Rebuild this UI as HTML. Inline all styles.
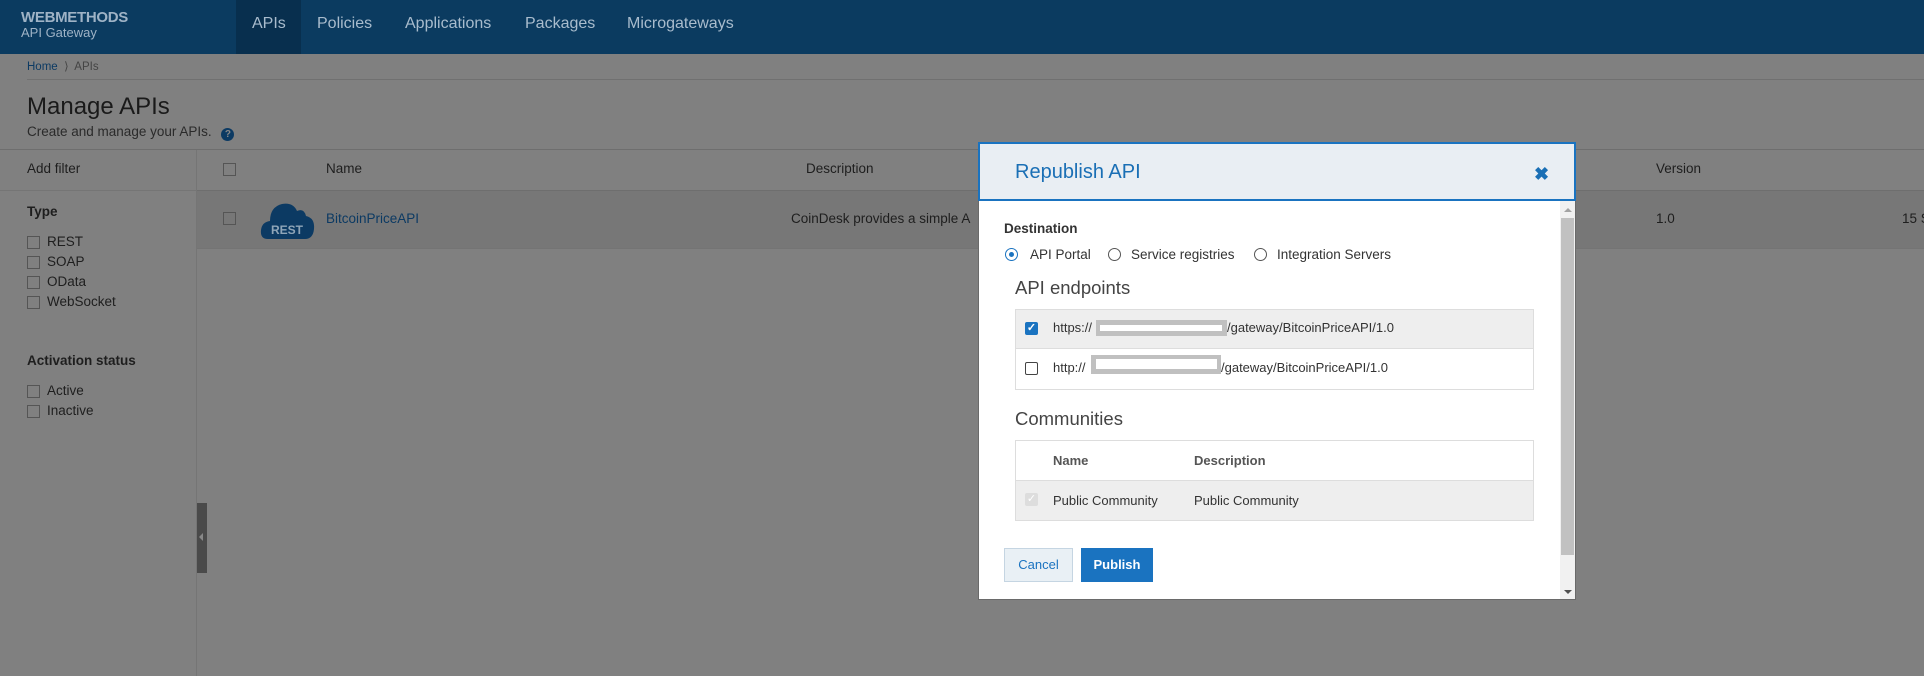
<!DOCTYPE html>
<html><head><meta charset="utf-8"><style>
*{box-sizing:border-box;margin:0;padding:0}
body{width:1924px;height:676px;overflow:hidden;background:#808080;font-family:"Liberation Sans",Arial,sans-serif;position:relative;color:#1a1a1a}
.a{position:absolute;white-space:nowrap}
.hdr{left:0;top:0;width:1924px;height:54px;background:#0b3b60}
.nav{top:15px;font-size:16px;color:#a9bccd}
.cb{position:absolute;width:13px;height:13px;border:1px solid #555;background:transparent}
.sb{font-size:13.5px;color:#1e1e1e}
.m{font-size:13px;color:#333}
</style></head><body>
<div class="a hdr"></div>
<div class="a" style="left:236px;top:0;width:65px;height:54px;background:#082f4e"></div>
<div class="a" style="left:21px;top:9px;font-size:15px;font-weight:bold;color:#9fb3c6;letter-spacing:-0.3px">WEBMETHODS</div>
<div class="a" style="left:21px;top:25px;font-size:13px;color:#9fb3c6">API Gateway</div>
<div class="a nav" style="left:252px">APIs</div>
<div class="a nav" style="left:317px">Policies</div>
<div class="a nav" style="left:405px">Applications</div>
<div class="a nav" style="left:525px">Packages</div>
<div class="a nav" style="left:627px">Microgateways</div>

<div class="a" style="left:27px;top:59px;font-size:11.5px;color:#0c3a63">Home <span style="color:#444">&nbsp;⟩&nbsp; APIs</span></div>
<div class="a" style="left:27px;top:79px;width:1897px;height:1px;background:#707070"></div>
<div class="a" style="left:27px;top:93px;font-size:24px;color:#1a1a1a">Manage APIs</div>
<div class="a" style="left:27px;top:124px;font-size:13.5px;color:#2a2a2a">Create and manage your APIs. <span style="display:inline-block;width:13px;height:13px;border-radius:50%;background:#0c3a63;color:#888;font-size:10px;text-align:center;line-height:13px;font-weight:bold;vertical-align:-1px;margin-left:6px">?</span></div>
<div class="a" style="left:0;top:149px;width:1924px;height:1px;background:#6e6e6e"></div>
<div class="a" style="left:196px;top:150px;width:1px;height:526px;background:#757575"></div>
<div class="a" style="left:0;top:190px;width:196px;height:1px;background:#757575"></div>
<div class="a" style="left:197px;top:190px;width:1727px;height:59px;background:#777;border-top:1px solid #6e6e6e;border-bottom:1px solid #747474"></div>

<div class="a sb" style="left:27px;top:161px">Add filter</div>
<div class="a sb" style="left:27px;top:204px;font-weight:bold">Type</div>
<div class="cb" style="left:27px;top:236px"></div><div class="a sb" style="left:47px;top:234px">REST</div>
<div class="cb" style="left:27px;top:256px"></div><div class="a sb" style="left:47px;top:254px">SOAP</div>
<div class="cb" style="left:27px;top:276px"></div><div class="a sb" style="left:47px;top:274px">OData</div>
<div class="cb" style="left:27px;top:296px"></div><div class="a sb" style="left:47px;top:294px">WebSocket</div>
<div class="a sb" style="left:27px;top:353px;font-weight:bold">Activation status</div>
<div class="cb" style="left:27px;top:385px"></div><div class="a sb" style="left:47px;top:383px">Active</div>
<div class="cb" style="left:27px;top:405px"></div><div class="a sb" style="left:47px;top:403px">Inactive</div>
<div class="a" style="left:197px;top:503px;width:10px;height:70px;background:#4a4a4a"></div>
<div class="a" style="left:199px;top:533px;width:0;height:0;border-top:4px solid transparent;border-bottom:4px solid transparent;border-right:4px solid #888"></div>

<div class="cb" style="left:223px;top:163px"></div>
<div class="a sb" style="left:326px;top:161px">Name</div>
<div class="a sb" style="left:806px;top:161px">Description</div>
<div class="a sb" style="left:1656px;top:161px">Version</div>
<div class="cb" style="left:223px;top:212px"></div>
<svg class="a" style="left:260px;top:199px" width="56" height="42" viewBox="0 0 56 42"><path d="M8 40 Q0 40 1 31 Q2 23 10 22 Q10 8 22 5 Q33 3 37 12 Q44 9 46 17 Q55 19 54 30 Q53 40 45 40 Z" fill="#0c3a63"/><text x="27" y="35" font-family="Liberation Sans" font-size="12" font-weight="bold" fill="#8fa5b8" text-anchor="middle">REST</text></svg>
<div class="a sb" style="left:326px;top:211px;color:#0c3a63">BitcoinPriceAPI</div>
<div class="a sb" style="left:791px;top:211px">CoinDesk provides a simple A</div>
<div class="a sb" style="left:1656px;top:211px">1.0</div>
<div class="a sb" style="left:1902px;top:211px">15 S</div>

<!-- modal -->
<div class="a" style="left:978px;top:142px;width:598px;height:458px;background:#fff;border:1px solid #6a6a6a"></div>
<div class="a" style="left:978px;top:142px;width:598px;height:59px;background:#e9eef3;border:2px solid #1a73c0"></div>
<div class="a" style="left:1015px;top:161px;font-size:20px;color:#1a6fb5">Republish API</div>
<div class="a" style="left:1534px;top:164px;font-size:18px;font-weight:bold;color:#1a6fb5">✖</div>
<div class="a" style="left:1560px;top:201px;width:15px;height:398px;background:#f1f1f1"></div>
<div class="a" style="left:1561px;top:218px;width:13px;height:337px;background:#c1c1c1"></div>
<div class="a" style="left:1564px;top:208px;border-left:4px solid transparent;border-right:4px solid transparent;border-bottom:4px solid #a3a3a3;width:0;height:0"></div>
<div class="a" style="left:1564px;top:590px;border-left:4px solid transparent;border-right:4px solid transparent;border-top:4px solid #505050;width:0;height:0"></div>

<div class="a" style="left:1004px;top:221px;font-size:13.5px;font-weight:bold;color:#333">Destination</div>
<div class="a" style="left:1005px;top:248px;width:13px;height:13px;border:1px solid #1a73c0;border-radius:50%"></div>
<div class="a" style="left:1009px;top:252px;width:5px;height:5px;background:#1a73c0;border-radius:50%"></div>
<div class="a m" style="left:1030px;top:247px;font-size:13.5px">API Portal</div>
<div class="a" style="left:1108px;top:248px;width:13px;height:13px;border:1px solid #555;border-radius:50%"></div>
<div class="a m" style="left:1131px;top:247px;font-size:13.5px">Service registries</div>
<div class="a" style="left:1254px;top:248px;width:13px;height:13px;border:1px solid #555;border-radius:50%"></div>
<div class="a m" style="left:1277px;top:247px;font-size:13.5px">Integration Servers</div>
<div class="a" style="left:1015px;top:277px;font-size:18.5px;color:#444">API endpoints</div>

<div class="a" style="left:1015px;top:309px;width:519px;height:81px;border:1px solid #ddd"></div>
<div class="a" style="left:1016px;top:310px;width:517px;height:39px;background:#eee;border-bottom:1px solid #ddd"></div>
<div class="a" style="left:1025px;top:322px;width:13px;height:13px;background:#1a73c0;border-radius:2px;color:#fff;font-size:11px;line-height:13px;text-align:center;font-weight:bold">✓</div>
<div class="a m" style="left:1053px;top:320px">https://</div>
<div class="a" style="left:1096px;top:320px;width:131px;height:16px;background:#c0c0c0"></div>
<div class="a" style="left:1100px;top:325px;width:122px;height:6px;background:#fff"></div>
<div class="a m" style="left:1227px;top:320px">/gateway/BitcoinPriceAPI/1.0</div>
<div class="a" style="left:1025px;top:362px;width:13px;height:13px;border:1px solid #444;border-radius:2px"></div>
<div class="a m" style="left:1053px;top:360px">http://</div>
<div class="a" style="left:1091px;top:355px;width:130px;height:19px;background:#c0c0c0"></div>
<div class="a" style="left:1096px;top:359px;width:121px;height:10px;background:#fff"></div>
<div class="a m" style="left:1221px;top:360px">/gateway/BitcoinPriceAPI/1.0</div>

<div class="a" style="left:1015px;top:408px;font-size:18.5px;color:#444">Communities</div>
<div class="a" style="left:1015px;top:440px;width:519px;height:81px;border:1px solid #ddd"></div>
<div class="a m" style="left:1053px;top:453px;font-weight:bold;color:#555">Name</div>
<div class="a m" style="left:1194px;top:453px;font-weight:bold;color:#555">Description</div>
<div class="a" style="left:1016px;top:480px;width:517px;height:40px;background:#eee;border-top:1px solid #ddd"></div>
<div class="a" style="left:1025px;top:493px;width:13px;height:13px;background:#ddd;border-radius:2px;color:#fff;font-size:11px;line-height:13px;text-align:center">✓</div>
<div class="a m" style="left:1053px;top:493px">Public Community</div>
<div class="a m" style="left:1194px;top:493px">Public Community</div>

<div class="a" style="left:1004px;top:548px;width:69px;height:34px;background:#e9f0f5;border:1px solid #c5d5e2;color:#1a73c0;font-size:13px;line-height:32px;text-align:center">Cancel</div>
<div class="a" style="left:1081px;top:548px;width:72px;height:34px;background:#1a73c0;color:#fff;font-size:13px;font-weight:bold;line-height:33px;text-align:center">Publish</div>
</body></html>
